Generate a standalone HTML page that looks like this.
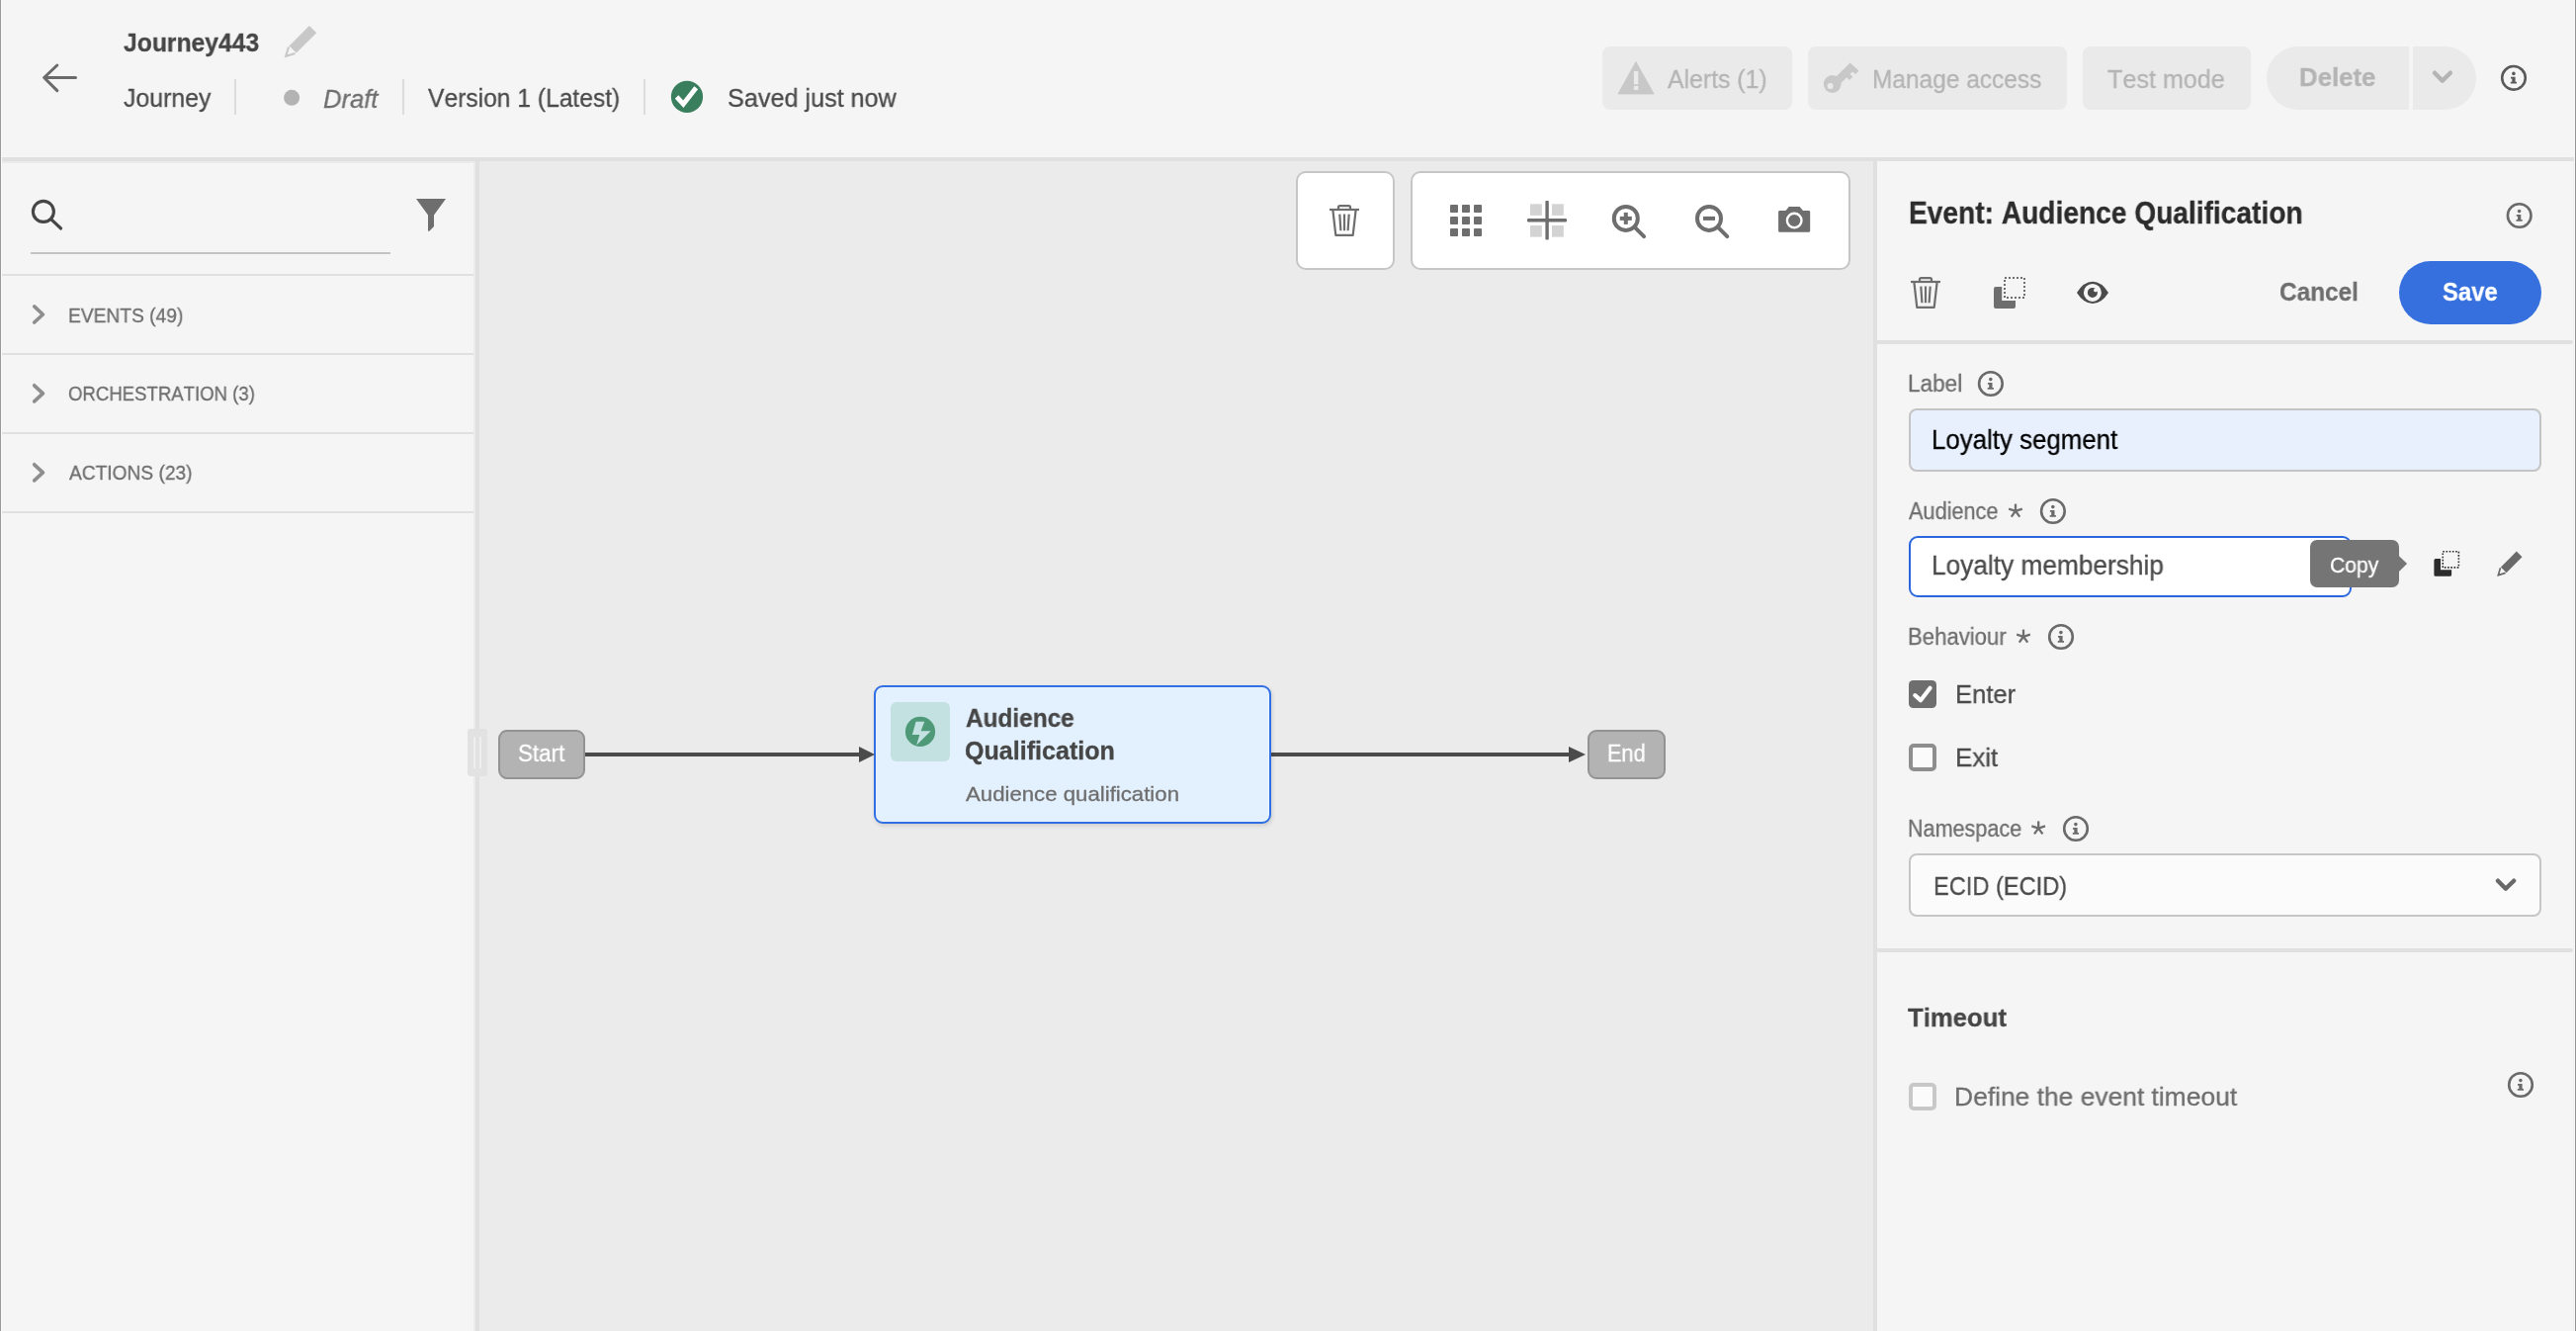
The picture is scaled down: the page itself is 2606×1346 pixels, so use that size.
<!DOCTYPE html>
<html lang="en"><head><meta charset="utf-8"><title>Journey443</title>
<style>
html,body{margin:0;padding:0;}
body{width:2606px;height:1346px;position:relative;overflow:hidden;background:#f5f5f5;font-family:"Liberation Sans",sans-serif;font-kerning:none;}
.a{position:absolute;box-sizing:border-box;}
.ic{left:0;top:0;pointer-events:none;}
.t{position:absolute;white-space:pre;line-height:40px;transform-origin:0 0;will-change:transform;-webkit-text-stroke:0.3px;}
</style></head><body>
<div class="bg">
<div class="a" style="left:0px;top:0px;width:2606px;height:159px;background:#f5f5f5;"></div>
<div class="a" style="left:0px;top:163px;width:2606px;height:1183px;background:#ebebeb;"></div>
<div class="a" style="left:0px;top:159px;width:2606px;height:4px;background:#e0e0e0;"></div>
<div class="a" style="left:1px;top:165px;width:478px;height:1181px;background:#f5f5f5;"></div>
<div class="a" style="left:481px;top:163px;width:4px;height:1183px;background:#e0e0e0;"></div>
<div class="a" style="left:1895px;top:163px;width:4px;height:1183px;background:#e0e0e0;"></div>
<div class="a" style="left:1899px;top:163px;width:704px;height:1183px;background:#f5f5f5;"></div>
<div class="a" style="left:2603px;top:163px;width:1px;height:1183px;background:#f0f0f0;"></div>
<div class="a" style="left:2604px;top:0px;width:1px;height:1346px;background:#fafafa;"></div>
<div class="a" style="left:2605px;top:0px;width:1px;height:1346px;background:#949494;"></div>
<div class="a" style="left:0px;top:0px;width:1px;height:1346px;background:#9a9a9a;"></div>
<div class="a" style="left:1px;top:0px;width:1px;height:1346px;background:#fbfbfb;"></div>
</div>
<header class="topbar">
<div class="a" style="left:1621px;top:47px;width:192px;height:64px;background:#eaeaea;border-radius:8px;"></div>
<div class="a" style="left:1829px;top:47px;width:262px;height:64px;background:#eaeaea;border-radius:8px;"></div>
<div class="a" style="left:2107px;top:47px;width:170px;height:64px;background:#eaeaea;border-radius:8px;"></div>
<div class="a" style="left:2293px;top:47px;width:144px;height:64px;background:#eaeaea;border-radius:32px 0 0 32px;"></div>
<div class="a" style="left:2441px;top:47px;width:64px;height:64px;background:#eaeaea;border-radius:0 32px 32px 0;"></div>
<svg class="a ic" width="2606" height="1346" viewBox="0 0 2606 1346" aria-hidden="true"><path d="M76.5 78.5H44.8M57.8 66L44.6 78.5L57.8 91.6" fill="none" stroke="#6a6a6a" stroke-width="3" stroke-linecap="round" stroke-linejoin="round"/><g transform="translate(288,26) scale(1.0)"><path d="M24.9 0L32.2 7.2L11.8 27.6L4.5 20.4Z" fill="#c8c8c8"/><path d="M4 21.5L1.2 30.8L10.6 28" fill="none" stroke="#c8c8c8" stroke-width="2.2" stroke-linejoin="miter"/></g><rect x="237" y="80" width="2" height="36" fill="#dcdcdc"/><rect x="407" y="80" width="2" height="36" fill="#dcdcdc"/><rect x="651" y="80" width="2" height="36" fill="#dcdcdc"/><circle cx="295.1" cy="98.8" r="8" fill="#b3b3b3"/><circle cx="695" cy="97.9" r="16.1" fill="#3a7f5d"/><path d="M684.6 98L691.3 105.2L704.2 88.8" fill="none" stroke="#fff" stroke-width="4.8" stroke-linecap="butt" stroke-linejoin="miter"/><path d="M1655 62.7L1673 94.9H1637Z" fill="#c8c8c8" stroke="#c8c8c8" stroke-width="1" stroke-linejoin="round"/><rect x="1652.9" y="72" width="4.4" height="13.3" fill="#eaeaea"/><rect x="1652.9" y="87" width="4.4" height="4" fill="#eaeaea"/><g fill="#c8c8c8"><circle cx="1853.7" cy="85" r="8.9"/><path d="M1857 78L1871.6 63.4L1880.5 71.5L1877 75L1874 72.4L1871.5 75L1874.3 77.6L1871 81L1868.2 78.3L1861.5 85Z"/></g><circle cx="1851.6" cy="87" r="3" fill="#eaeaea"/><path d="M2463 73.7L2470.8 81.6L2478.9 73.7" fill="none" stroke="#b4b4b4" stroke-width="4.4" stroke-linecap="round" stroke-linejoin="round"/><g><circle cx="2543" cy="78.8" r="11.8" fill="none" stroke="#5a5a5a" stroke-width="2.6"/><circle cx="2542.9" cy="74.39999999999999" r="1.8" fill="#5a5a5a"/><path d="M2540.0 77.8H2544.6V82.8H2546.0V84.6H2539.8V82.8H2541.3V79.6H2540.0Z" fill="#5a5a5a"/></g></svg>
<span class="t" style="left:124.63px;top:23px;font-size:26.5px;transform:scaleX(0.9319);color:#464646;font-weight:700;">Journey443</span>
<span class="t" style="left:124.61px;top:79px;font-size:26.5px;transform:scaleX(0.9381);color:#4b4b4b;">Journey</span>
<span class="t" style="left:327.21px;top:80px;font-size:26.5px;transform:scaleX(0.9647);color:#6e6e6e;font-style:italic;">Draft</span>
<span class="t" style="left:433.29px;top:79px;font-size:26.5px;transform:scaleX(0.9287);color:#4b4b4b;">Version 1 (Latest)</span>
<span class="t" style="left:736.16px;top:79px;font-size:26.5px;transform:scaleX(0.9503);color:#4b4b4b;">Saved just now</span>
<span class="t" style="left:1686.95px;top:60px;font-size:26.5px;transform:scaleX(0.9358);color:#b4b4b4;">Alerts (1)</span>
<span class="t" style="left:1894.49px;top:60px;font-size:26.5px;transform:scaleX(0.9234);color:#b4b4b4;">Manage access</span>
<span class="t" style="left:2132.44px;top:60px;font-size:26.5px;transform:scaleX(0.9480);color:#b4b4b4;">Test mode</span>
<span class="t" style="left:2326.27px;top:58px;font-size:26.5px;transform:scaleX(0.9732);color:#b4b4b4;font-weight:700;">Delete</span>
</header>
<aside class="palette">
<div class="a" style="left:31px;top:255px;width:364px;height:2px;background:#c4c4c4;"></div>
<div class="a" style="left:2px;top:277px;width:477px;height:2px;background:#e1e1e1;"></div>
<div class="a" style="left:2px;top:357px;width:477px;height:2px;background:#e1e1e1;"></div>
<div class="a" style="left:2px;top:437px;width:477px;height:2px;background:#e1e1e1;"></div>
<div class="a" style="left:2px;top:517px;width:477px;height:2px;background:#e1e1e1;"></div>
<div class="a" style="left:473px;top:737px;width:20px;height:48px;background:#e2e2e2;border-radius:3px;"></div>
<div class="a" style="left:479px;top:745px;width:2px;height:32px;background:#eeeeee;"></div>
<svg class="a ic" width="2606" height="1346" viewBox="0 0 2606 1346" aria-hidden="true"><circle cx="43.9" cy="213.9" r="10.5" fill="none" stroke="#464646" stroke-width="3.1"/><path d="M51.6 221.6L61.6 231" stroke="#464646" stroke-width="3.1" stroke-linecap="round"/><path d="M421 201H451L439 217.5V229L434 234L433 233.6V217.5Z" fill="#6e6e6e"/><path d="M34.7 309.9L43.4 318.0L34.7 326.0" fill="none" stroke="#8e8e8e" stroke-width="3.7" stroke-linecap="round" stroke-linejoin="round"/><path d="M34.7 389.79999999999995L43.4 397.9L34.7 405.9" fill="none" stroke="#8e8e8e" stroke-width="3.7" stroke-linecap="round" stroke-linejoin="round"/><path d="M34.7 469.79999999999995L43.4 477.9L34.7 485.9" fill="none" stroke="#8e8e8e" stroke-width="3.7" stroke-linecap="round" stroke-linejoin="round"/></svg>
<span class="t" style="left:68.52px;top:299px;font-size:21px;transform:scaleX(0.9148);color:#6e6e6e;">EVENTS (49)</span>
<span class="t" style="left:68.82px;top:378px;font-size:21px;transform:scaleX(0.8849);color:#6e6e6e;">ORCHESTRATION (3)</span>
<span class="t" style="left:69.66px;top:458px;font-size:21px;transform:scaleX(0.9121);color:#6e6e6e;">ACTIONS (23)</span>
</aside>
<main class="canvas">
<div class="a" style="left:1311px;top:173px;width:100px;height:100px;background:#fff;border:2px solid #c6c6c6;border-radius:10px;"></div>
<div class="a" style="left:1427px;top:173px;width:445px;height:100px;background:#fff;border:2px solid #c6c6c6;border-radius:10px;"></div>
<div class="a" style="left:485px;top:745px;width:2px;height:32px;background:#eeeeee;"></div>
<div class="a" style="left:504px;top:738px;width:88px;height:50px;background:#b3b3b3;border:2px solid #939393;border-radius:9px;"></div>
<div class="a" style="left:1605.5px;top:738px;width:79.5px;height:50px;background:#b3b3b3;border:2px solid #939393;border-radius:9px;"></div>
<div class="a" style="left:592px;top:761px;width:280px;height:3.6px;background:#4b4b4b;"></div>
<div class="a" style="left:1286px;top:761px;width:303px;height:3.6px;background:#4b4b4b;"></div>
<div class="a" style="left:884px;top:693px;width:402px;height:140px;background:#e3f0fd;border:2px solid #3070e4;border-radius:9px;box-shadow:1px 2px 4px rgba(0,0,0,.13),inset 0 0 0 1px rgba(255,255,255,.3);"></div>
<div class="a" style="left:901px;top:710px;width:60px;height:60px;background:#c3e1e1;border-radius:6px;"></div>
<svg class="a ic" width="2606" height="1346" viewBox="0 0 2606 1346" aria-hidden="true"><g transform="translate(1345,207)" fill="none" stroke="#6e6e6e" stroke-width="2.2" stroke-linejoin="round" stroke-linecap="butt"><path d="M0 5H30"/><path d="M9 4.5V2.6Q9 1.1 10.5 1.1H19.5Q21 1.1 21 2.6V4.5"/><path d="M3.4 5.5L6.3 30.8H23.7L26.6 5.5"/><path d="M10.3 9.6L11.4 26.2M15 9.6V26.2M19.7 9.6L18.6 26.2"/></g><rect x="1467" y="207" width="8" height="8" rx="0.8" fill="#6e6e6e"/><rect x="1479" y="207" width="8" height="8" rx="0.8" fill="#6e6e6e"/><rect x="1491" y="207" width="8" height="8" rx="0.8" fill="#6e6e6e"/><rect x="1467" y="219" width="8" height="8" rx="0.8" fill="#6e6e6e"/><rect x="1479" y="219" width="8" height="8" rx="0.8" fill="#6e6e6e"/><rect x="1491" y="219" width="8" height="8" rx="0.8" fill="#6e6e6e"/><rect x="1467" y="231" width="8" height="8" rx="0.8" fill="#6e6e6e"/><rect x="1479" y="231" width="8" height="8" rx="0.8" fill="#6e6e6e"/><rect x="1491" y="231" width="8" height="8" rx="0.8" fill="#6e6e6e"/><rect x="1548" y="206.3" width="11.8" height="11.6" fill="#d3d3d3"/><rect x="1570" y="206.3" width="11.8" height="11.6" fill="#d3d3d3"/><rect x="1548" y="228" width="11.8" height="11.6" fill="#d3d3d3"/><rect x="1570" y="228" width="11.8" height="11.6" fill="#d3d3d3"/><rect x="1563.4" y="203" width="3.4" height="39.6" rx="1" fill="#6e6e6e"/><rect x="1545" y="221" width="40" height="3.6" rx="1" fill="#6e6e6e"/><circle cx="1644.8" cy="220.9" r="12" fill="none" stroke="#6e6e6e" stroke-width="4"/><path d="M1653.6 229.70000000000002L1663.1 239.20000000000002" stroke="#6e6e6e" stroke-width="4" stroke-linecap="round"/><rect x="1638.8" y="218.9" width="12" height="4" fill="#6e6e6e"/><rect x="1642.8" y="214.9" width="4" height="12" fill="#6e6e6e"/><circle cx="1729" cy="220.9" r="12" fill="none" stroke="#6e6e6e" stroke-width="4"/><path d="M1737.8 229.70000000000002L1747.3 239.20000000000002" stroke="#6e6e6e" stroke-width="4" stroke-linecap="round"/><rect x="1723" y="218.9" width="12" height="4" fill="#6e6e6e"/><path d="M1800.3 213H1806.5L1809.8 209H1820.6L1824 213H1830 Q1831.2 213 1831.2 214.2V233.6Q1831.2 234.8 1830 234.8H1800.3Q1799.1 234.8 1799.1 233.6V214.2Q1799.1 213 1800.3 213Z" fill="#6e6e6e"/><circle cx="1815.2" cy="223" r="7.3" fill="none" stroke="#fff" stroke-width="2.4"/><path d="M869 755L885 763L869 771Z" fill="#4b4b4b"/><path d="M1587 755L1604 763L1587 771Z" fill="#4b4b4b"/><circle cx="931" cy="739.9" r="15.1" fill="#4e9a78"/><path d="M926.6 729.8H935.3L931.6 739.3H941.7L927.2 753.4L930.3 742.9H922.9Z" fill="#c3e1e1"/></svg>
<span class="t" style="left:523.99px;top:742px;font-size:23px;transform:scaleX(0.9713);color:#fff;">Start</span>
<span class="t" style="left:1625.82px;top:742px;font-size:23px;transform:scaleX(0.9426);color:#fff;">End</span>
<span class="t" style="left:976.69px;top:706px;font-size:25px;transform:scaleX(0.9753);color:#464646;font-weight:700;">Audience</span>
<span class="t" style="left:976.27px;top:739px;font-size:25px;transform:scaleX(1.0032);color:#464646;font-weight:700;">Qualification</span>
<span class="t" style="left:977.26px;top:783px;font-size:21px;transform:scaleX(1.0571);color:#6e6e6e;">Audience qualification</span>
</main>
<aside class="inspector">
<div class="a" style="left:1899px;top:344px;width:704px;height:4px;background:#e0e0e0;border-radius:0 2px 2px 0;"></div>
<div class="a" style="left:1899px;top:959px;width:704px;height:4px;background:#e0e0e0;border-radius:0 2px 2px 0;"></div>
<div class="a" style="left:2427px;top:264px;width:144px;height:64px;background:#3570de;border-radius:32px;"></div>
<div class="a" style="left:1931px;top:413px;width:640px;height:64px;background:#e8f0fe;border:2px solid #c4c4c4;border-radius:8px;"></div>
<div class="a" style="left:1931px;top:542px;width:448px;height:62px;background:#fff;border:2.5px solid #2a66dd;border-radius:9px;"></div>
<div class="a" style="left:2337px;top:546px;width:90.2px;height:48px;background:#757575;border-radius:7px;"></div>
<div class="a" style="left:1931px;top:688px;width:28px;height:28px;background:#6e6e6e;border-radius:4.5px;"></div>
<div class="a" style="left:1931px;top:752px;width:28px;height:28px;background:#fbfbfb;border:4px solid #8e8e8e;border-radius:5px;"></div>
<div class="a" style="left:1931px;top:863px;width:640px;height:64px;background:#fbfbfb;border:2px solid #c6c6c6;border-radius:8px;"></div>
<div class="a" style="left:1931px;top:1095px;width:28px;height:28px;background:#fbfbfb;border:4px solid #c8c8c8;border-radius:5px;"></div>
<svg class="a ic" width="2606" height="1346" viewBox="0 0 2606 1346" aria-hidden="true"><g><circle cx="2548.7" cy="218" r="11.8" fill="none" stroke="#6a6a6a" stroke-width="2.6"/><circle cx="2548.6" cy="213.6" r="1.8" fill="#6a6a6a"/><path d="M2545.7 217.0H2550.2999999999997V222.0H2551.7V223.8H2545.5V222.0H2547.0V218.8H2545.7Z" fill="#6a6a6a"/></g><g transform="translate(1933,280)" fill="none" stroke="#6e6e6e" stroke-width="2.2" stroke-linejoin="round" stroke-linecap="butt"><path d="M0 5H30"/><path d="M9 4.5V2.6Q9 1.1 10.5 1.1H19.5Q21 1.1 21 2.6V4.5"/><path d="M3.4 5.5L6.3 30.8H23.7L26.6 5.5"/><path d="M10.3 9.6L11.4 26.2M15 9.6V26.2M19.7 9.6L18.6 26.2"/></g><g transform="translate(2017,280)"><path d="M0 12Q0 10 2 10H8.2V24H22V30Q22 32 20 32H2Q0 32 0 30Z" fill="#6e6e6e"/><rect x="11" y="1" width="20" height="20" fill="none" stroke="#6e6e6e" stroke-width="2" stroke-dasharray="2 2"/></g><path d="M2101 296Q2108 284.8 2117 284.8Q2126 284.8 2133 296Q2126 307 2117 307Q2108 307 2101 296Z" fill="#4b4b4b"/><circle cx="2116.9" cy="295.9" r="7" fill="none" stroke="#f5f5f5" stroke-width="4"/><circle cx="2120" cy="293.4" r="1.9" fill="#f5f5f5"/><g><circle cx="2013.9" cy="388" r="11.8" fill="none" stroke="#6a6a6a" stroke-width="2.6"/><circle cx="2013.8000000000002" cy="383.6" r="1.8" fill="#6a6a6a"/><path d="M2010.9 387.0H2015.5V392.0H2016.9V393.8H2010.7V392.0H2012.2V388.8H2010.9Z" fill="#6a6a6a"/></g><path d="M0 0V-7.2" transform="translate(2039,516.8) rotate(0)" stroke="#6e6e6e" stroke-width="2.3"/><path d="M0 0V-7.2" transform="translate(2039,516.8) rotate(72)" stroke="#6e6e6e" stroke-width="2.3"/><path d="M0 0V-7.2" transform="translate(2039,516.8) rotate(144)" stroke="#6e6e6e" stroke-width="2.3"/><path d="M0 0V-7.2" transform="translate(2039,516.8) rotate(216)" stroke="#6e6e6e" stroke-width="2.3"/><path d="M0 0V-7.2" transform="translate(2039,516.8) rotate(288)" stroke="#6e6e6e" stroke-width="2.3"/><g><circle cx="2076.9" cy="517" r="11.8" fill="none" stroke="#6a6a6a" stroke-width="2.6"/><circle cx="2076.8" cy="512.6" r="1.8" fill="#6a6a6a"/><path d="M2073.9 516.0H2078.5V521.0H2079.9V522.8H2073.7000000000003V521.0H2075.2000000000003V517.8H2073.9Z" fill="#6a6a6a"/></g><path d="M0 0V-7.2" transform="translate(2047,643.8) rotate(0)" stroke="#6e6e6e" stroke-width="2.3"/><path d="M0 0V-7.2" transform="translate(2047,643.8) rotate(72)" stroke="#6e6e6e" stroke-width="2.3"/><path d="M0 0V-7.2" transform="translate(2047,643.8) rotate(144)" stroke="#6e6e6e" stroke-width="2.3"/><path d="M0 0V-7.2" transform="translate(2047,643.8) rotate(216)" stroke="#6e6e6e" stroke-width="2.3"/><path d="M0 0V-7.2" transform="translate(2047,643.8) rotate(288)" stroke="#6e6e6e" stroke-width="2.3"/><g><circle cx="2085" cy="644" r="11.8" fill="none" stroke="#6a6a6a" stroke-width="2.6"/><circle cx="2084.9" cy="639.6" r="1.8" fill="#6a6a6a"/><path d="M2082.0 643.0H2086.6V648.0H2088.0V649.8H2081.8V648.0H2083.3V644.8H2082.0Z" fill="#6a6a6a"/></g><path d="M0 0V-7.2" transform="translate(2062.2,837.6) rotate(0)" stroke="#6e6e6e" stroke-width="2.3"/><path d="M0 0V-7.2" transform="translate(2062.2,837.6) rotate(72)" stroke="#6e6e6e" stroke-width="2.3"/><path d="M0 0V-7.2" transform="translate(2062.2,837.6) rotate(144)" stroke="#6e6e6e" stroke-width="2.3"/><path d="M0 0V-7.2" transform="translate(2062.2,837.6) rotate(216)" stroke="#6e6e6e" stroke-width="2.3"/><path d="M0 0V-7.2" transform="translate(2062.2,837.6) rotate(288)" stroke="#6e6e6e" stroke-width="2.3"/><g><circle cx="2100" cy="838" r="11.8" fill="none" stroke="#6a6a6a" stroke-width="2.6"/><circle cx="2099.9" cy="833.6" r="1.8" fill="#6a6a6a"/><path d="M2097.0 837.0H2101.6V842.0H2103.0V843.8H2096.8V842.0H2098.3V838.8H2097.0Z" fill="#6a6a6a"/></g><g><circle cx="2550" cy="1097" r="11.8" fill="none" stroke="#6a6a6a" stroke-width="2.6"/><circle cx="2549.9" cy="1092.6" r="1.8" fill="#6a6a6a"/><path d="M2547.0 1096.0H2551.6V1101.0H2553.0V1102.8H2546.8V1101.0H2548.3V1097.8H2547.0Z" fill="#6a6a6a"/></g><path d="M2427 562.3L2435.1 570L2427 577.9Z" fill="#757575"/><g transform="translate(2462.4,557) scale(0.805)"><g transform="translate(0,0)"><path d="M0 12Q0 10 2 10H8.2V24H22V30Q22 32 20 32H2Q0 32 0 30Z" fill="#2c2c2c"/><rect x="11" y="1" width="20" height="20" fill="none" stroke="#2c2c2c" stroke-width="2" stroke-dasharray="2 2"/></g></g><g transform="translate(2526.4,557.6) scale(0.78)"><path d="M24.9 0L32.2 7.2L11.8 27.6L4.5 20.4Z" fill="#6a6a6a"/><path d="M4 21.5L1.2 30.8L10.6 28" fill="none" stroke="#6a6a6a" stroke-width="2.2" stroke-linejoin="miter"/></g><path d="M1937.3 703.2L1943 708.2L1952.6 695.8" fill="none" stroke="#fff" stroke-width="4.2" stroke-linecap="round" stroke-linejoin="round"/><path d="M2527 890.7L2534.9 898.7L2543.1 890.7" fill="none" stroke="#696969" stroke-width="4.4" stroke-linecap="round" stroke-linejoin="round"/></svg>
<span class="t" style="left:1930.52px;top:195px;font-size:30.5px;transform:scaleX(0.9224);color:#2c2c2c;font-weight:700;">Event: Audience Qualification</span>
<span class="t" style="left:2305.90px;top:275px;font-size:26.5px;transform:scaleX(0.9197);color:#6e6e6e;font-weight:700;">Cancel</span>
<span class="t" style="left:2471.01px;top:275px;font-size:26.5px;transform:scaleX(0.8984);color:#fff;font-weight:700;">Save</span>
<span class="t" style="left:1929.95px;top:368px;font-size:23px;transform:scaleX(0.9820);color:#6e6e6e;">Label</span>
<span class="t" style="left:1953.88px;top:425px;font-size:27px;transform:scaleX(0.9578);color:#000;">Loyalty segment</span>
<span class="t" style="left:1930.86px;top:497px;font-size:23px;transform:scaleX(0.9437);color:#6e6e6e;">Audience</span>
<span class="t" style="left:1953.85px;top:552px;font-size:27px;transform:scaleX(0.9725);color:#4b4b4b;">Loyalty membership</span>
<span class="t" style="left:2357.33px;top:552px;font-size:21.5px;transform:scaleX(0.9805);color:#fff;">Copy</span>
<span class="t" style="left:1929.78px;top:624px;font-size:23px;transform:scaleX(0.9625);color:#6e6e6e;">Behaviour</span>
<span class="t" style="left:1977.90px;top:682px;font-size:26.5px;transform:scaleX(0.9650);color:#4b4b4b;">Enter</span>
<span class="t" style="left:1977.87px;top:746px;font-size:26.5px;transform:scaleX(0.9783);color:#4b4b4b;">Exit</span>
<span class="t" style="left:1929.83px;top:818px;font-size:23px;transform:scaleX(0.9381);color:#6e6e6e;">Namespace</span>
<span class="t" style="left:1955.96px;top:876px;font-size:26.5px;transform:scaleX(0.8909);color:#4b4b4b;">ECID (ECID)</span>
<span class="t" style="left:1930.31px;top:1009px;font-size:26.5px;transform:scaleX(0.9704);color:#464646;font-weight:700;">Timeout</span>
<span class="t" style="left:1976.84px;top:1089px;font-size:26.5px;transform:scaleX(0.9958);color:#6e6e6e;">Define the event timeout</span>
</aside>
</body></html>
